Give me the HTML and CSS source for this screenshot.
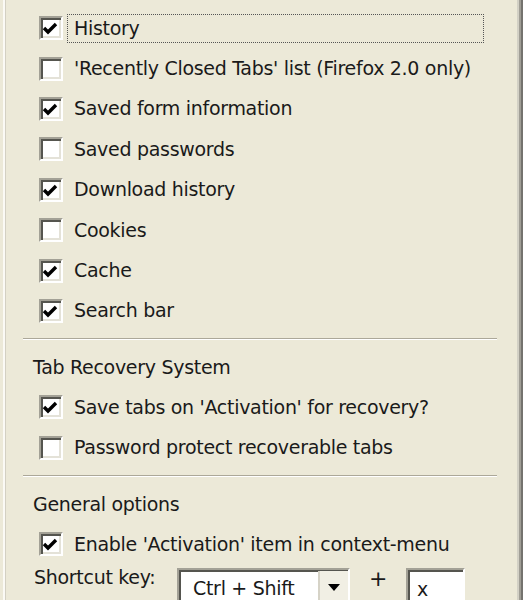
FILE: index.html
```html
<!DOCTYPE html>
<html lang="en">
<head>
    <meta charset="UTF-8">
    <title>Options</title>
    <link rel="stylesheet" href="styles.css">
</head>
<body>

    <div class="panel">

        <div class="options">
            <div class="row">
                <span class="box"><svg class="check" viewBox="0 0 20 20"><polyline points="3,10 7,14 15,6"/></svg></span>
                <span class="text focus">History</span>
            </div>
            <div class="row">
                <span class="box"></span>
                <span class="text">'Recently Closed Tabs' list (Firefox 2.0 only)</span>
            </div>
            <div class="row">
                <span class="box"><svg class="check" viewBox="0 0 20 20"><polyline points="3,10 7,14 15,6"/></svg></span>
                <span class="text">Saved form information</span>
            </div>
            <div class="row">
                <span class="box"></span>
                <span class="text">Saved passwords</span>
            </div>
            <div class="row">
                <span class="box"><svg class="check" viewBox="0 0 20 20"><polyline points="3,10 7,14 15,6"/></svg></span>
                <span class="text">Download history</span>
            </div>
            <div class="row">
                <span class="box"></span>
                <span class="text">Cookies</span>
            </div>
            <div class="row">
                <span class="box"><svg class="check" viewBox="0 0 20 20"><polyline points="3,10 7,14 15,6"/></svg></span>
                <span class="text">Cache</span>
            </div>
            <div class="row">
                <span class="box"><svg class="check" viewBox="0 0 20 20"><polyline points="3,10 7,14 15,6"/></svg></span>
                <span class="text">Search bar</span>
            </div>
        </div>

        <div class="separator"></div>

        <div class="heading">Tab Recovery System</div>
        <div class="row">
            <span class="box"><svg class="check" viewBox="0 0 20 20"><polyline points="3,10 7,14 15,6"/></svg></span>
            <span class="text">Save tabs on 'Activation' for recovery?</span>
        </div>
        <div class="row">
            <span class="box"></span>
            <span class="text">Password protect recoverable tabs</span>
        </div>

        <div class="separator"></div>

        <div class="heading">General options</div>
        <div class="row">
            <span class="box"><svg class="check" viewBox="0 0 20 20"><polyline points="3,10 7,14 15,6"/></svg></span>
            <span class="text">Enable 'Activation' item in context-menu</span>
        </div>

        <div class="shortcut">
            <span class="shortcut-label">Shortcut key:</span>
            <div class="combo">
                <span class="combo-value">Ctrl + Shift</span>
                <span class="combo-btn"><span class="arrow"></span></span>
            </div>
            <span class="plus">+</span>
            <div class="keybox">x</div>
        </div>

    </div>

    <div class="edge"></div>

</body>
</html>
```

FILE: styles.css
```css
body {
    margin: 0;
    height: 600px;
    overflow: hidden;
    display: flex;
    background-color: #ece9d8;
    font-family: "DejaVu Sans", sans-serif;
    font-size: 19px;
    letter-spacing: -0.3px;
    color: #1a1a1a;
}

.panel {
    flex: 1;
    margin-left: 3px;
    border-left: 2px solid #fbfaf5;
    box-shadow: inset 1px 0 #d3d0c3;
}

.edge {
    width: 6px;
    background: linear-gradient(to right, #d2d0c5 0 2px, #a09e96 2px 4px, #74736e 4px);
}

.options {
    padding-top: 8px;
}

.row {
    display: flex;
    align-items: center;
    height: 40.4px;
    padding-left: 34px;
}

/* sunken classic checkbox */
.box {
    width: 24px;
    height: 24px;
    box-sizing: border-box;
    background-color: #fff;
    border: 2px solid;
    border-color: #a3a196 #fff #fff #a3a196;
    box-shadow: inset 2px 2px #55554f, inset -2px -2px #e4e2d8;
}

.check {
    display: block;
    width: 20px;
    height: 20px;
}

.check polyline {
    fill: none;
    stroke: #000;
    stroke-width: 3.4;
}

.text {
    box-sizing: border-box;
    width: 417px;
    height: 29px;
    line-height: 27px;
    margin-left: 4px;
    padding-left: 6px;
    border: 1px dotted transparent;
    white-space: nowrap;
}

.text.focus {
    border-color: #555;
}

.separator {
    height: 1px;
    margin: 7px 20px 7px 18px;
    background-color: #aca899;
    border-bottom: 1px solid #fff;
}

.heading {
    height: 40px;
    line-height: 40px;
    padding-left: 28px;
}

.shortcut {
    display: flex;
    align-items: flex-start;
    padding-left: 29px;
}

.shortcut-label {
    width: 143px;
    line-height: 24px;
    padding-top: 1px;
}

.combo, .keybox {
    box-sizing: border-box;
    height: 40px;
    margin-top: 3.6px;
    background-color: #fff;
    border: 2px solid;
    border-color: #a3a196 #fff #fff #a3a196;
    box-shadow: inset 2px 2px #55554f;
}

.combo {
    display: flex;
    width: 173px;
}

.combo-value {
    flex: 1;
    padding: 7px 0 0 14px;
    line-height: 22px;
}

.combo-btn {
    width: 30px;
    margin-top: 1px;
    box-sizing: border-box;
    background-color: #f1efe4;
    border-left: 2px solid #d6d3c7;
    display: flex;
    justify-content: center;
}

.arrow {
    margin-top: 13px;
    width: 0;
    height: 0;
    border-top: 7px solid #000;
    border-left: 6px solid transparent;
    border-right: 6px solid transparent;
}

.plus {
    width: 56px;
    text-align: center;
    line-height: 24px;
    padding-top: 3px;
    font-size: 22px;
}

.keybox {
    width: 59px;
    padding: 8px 0 0 9px;
    line-height: 22px;
}
```
